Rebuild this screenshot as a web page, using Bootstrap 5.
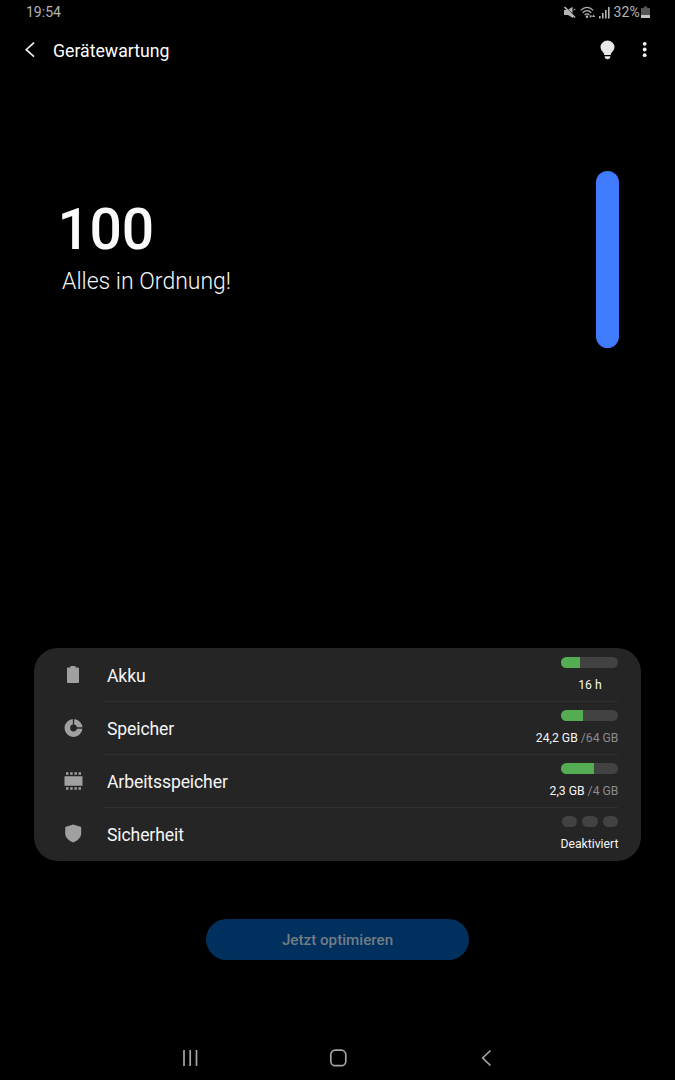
<!DOCTYPE html>
<html lang="de" data-bs-theme="dark">
<head>
<meta charset="utf-8">
<meta name="viewport" content="width=device-width, initial-scale=1">
<title>Gerätewartung</title>
<link href="https://cdn.jsdelivr.net/npm/bootstrap@5.3.0/dist/css/bootstrap.min.css" rel="stylesheet">
<style>
  body { background: #000; color: #f5f5f5; font-family: Roboto, "Liberation Sans", sans-serif; height: 1080px; overflow: hidden; }
  svg { display: block; flex: none; }
  .status { height: 25px; padding: 0 25px 0 26px; color: #b4b4b4; font-size: 14px; }
  .appbar { height: 50px; padding: 0 25px 0 24px; }
  .appbar h1 { font-size: 17.7px; line-height: 24px; margin-left: 17px; padding-top: 1px; }
  .hero { height: 573px; padding: 96px 56.4px 0 57.5px; }
  .score { font-size: 57px; line-height: 60px; font-weight: 500; margin-top: 29px; color: #fafafa; letter-spacing: -.3px; }
  .verdict { font-size: 23px; line-height: 30px; font-weight: 300; margin: 7px 0 0 4.5px; }
  .gauge { width: 23px; height: 177px; background: #407bff; }
  .panel { margin: 0 34px; height: 212.5px; border-radius: 24px; background: #252525; }
  .entry { height: 53.15px; padding: 0 22.6px 0 29px; }
  .entry-body { margin-left: 20px; padding-left: 3px; height: 53.6px; border-bottom: 1px solid #303030; }
  .entry:last-child .entry-body { border-color: transparent; }
  .entry-name { font-size: 17.6px; line-height: 24px; padding-top: 15.5px; letter-spacing: -.12px; }
  .entry-info { font-size: 12.2px; line-height: 16px; padding-top: 9px; }
  .meter { --bs-progress-height: 11px; --bs-progress-bg: #424242; --bs-progress-bar-bg: #54ad53; --bs-progress-border-radius: 6px; width: 57px; margin-bottom: 9px; }
  .total { color: #8b8b8b; }
  .dots { gap: 5.5px; }
  .dot { width: 15.3px; height: 11px; background: #424242; margin-bottom: 9px; }
  .optimize { --bs-btn-disabled-bg: #00305e; --bs-btn-disabled-color: #717c85; --bs-btn-disabled-opacity: 1; width: 263px; height: 41px; font-size: 15.2px; font-weight: 500; margin-top: 58px; }
  .optimize span { display: block; padding-top: 2px; }
  .navkeys { height: 44px; padding: 0 183px 0 182px; color: #a5a5a5; }
</style>
</head>
<body class="d-flex flex-column">
  <div class="status d-flex align-items-center justify-content-between">
    <span id="clock">19:54</span>
    <div class="d-flex align-items-center">
      <svg width="13" height="13" viewBox="0 0 13 13" fill="currentColor"><path d="M1 4h3.500L10 9.200V12L5 9H1zM5.500 3.600 9.500 .8V7.300zM10.200 4.100l1.800-1.500.5.800-1.900 1.200z"/><path d="m1.500 1 10.500 10.500" stroke="currentColor" stroke-width="1.700"/></svg>
      <svg style="margin-left:4px" width="16" height="13" viewBox="0 0 16 13" fill="none" stroke="currentColor" stroke-width="1.300"><path d="M.7 4.400Q7-1.600 13.300 4.400M2.700 6.700Q7 2.600 11.300 6.700M4.700 9Q7 6.800 9.300 9"/><circle cx="7" cy="10.800" r="1.300" fill="currentColor" stroke="none"/><path fill="currentColor" stroke="none" d="M9.200 9.500h3L10.700 12zM12 11h3.200l-1.600-2.600z"/></svg>
      <svg style="margin-left:3px" width="11" height="12" viewBox="0 0 11 12" fill="currentColor"><path d="M0 9h1.600V11.500H0zM3 6h1.600V11.500H3zM6 3h1.600V11.500H6zM9 0h1.600V11.500H9z"/></svg>
      <span id="charge" style="margin-left:3.500px;letter-spacing:.2px">32%</span>
      <svg style="margin-left:1px" width="9" height="13" viewBox="0 0 9 13"><path d="M2.800 .5h3.400v1.500H9V9H0V2h2.800z" fill="#555"/><path d="M0 9h9v3H0z" fill="#c6c6c6"/></svg>
    </div>
  </div>

  <header class="appbar d-flex align-items-center">
    <svg width="12" height="16" viewBox="0 0 12 16" fill="none" stroke="#f5f5f5" stroke-width="1.600"><path d="M10 .7 2.200 7.700l7.800 7"/></svg>
    <h1 class="fw-normal mb-0">Gerätewartung</h1>
    <div class="d-flex align-items-center ms-auto">
      <svg width="15" height="20" viewBox="0 0 14 20" preserveAspectRatio="none" fill="#e8e8e8"><path d="M7 .5A6.500 6.500 0 0 0 .5 7c0 2.200 1.100 3.800 2.300 5.200.8.800 1 1.600 1.200 2.800h6c.2-1.200.4-2 1.200-2.800C12.400 10.800 13.500 9.200 13.500 7A6.500 6.500 0 0 0 7 .5zM4.300 16.200h5.400c0 1.900-1.200 3-2.700 3s-2.700-1.100-2.700-3z"/></svg>
      <svg style="margin-left:27px" width="8" height="18" viewBox="0 0 8 18" fill="#f5f5f5"><circle cx="2.700" cy="2.800" r="1.900"/><circle cx="2.700" cy="8.500" r="1.900"/><circle cx="2.700" cy="14.200" r="1.900"/></svg>
    </div>
  </header>

  <section class="hero d-flex justify-content-between align-items-start">
    <div>
      <div class="score" id="score">100</div>
      <div class="verdict">Alles in Ordnung!</div>
    </div>
    <div class="gauge rounded-pill"></div>
  </section>

  <main>
    <div class="panel overflow-hidden">
      <div class="entry d-flex">
        <svg class="mt-3" width="21" height="21" viewBox="0 0 21 21" fill="#a0a0a0"><path d="M7.500 2h5v1.500H15q1 0 1 1V18q0 1-1 1H5q-1 0-1-1V4.500q0-1 1-1h2.500z"/></svg>
        <div class="entry-body flex-grow-1 d-flex justify-content-between">
          <div class="entry-name">Akku</div>
          <div class="entry-info d-flex flex-column align-items-center">
            <div class="progress meter"><div class="progress-bar" style="width:32%"></div></div>
            <div>16 h</div>
          </div>
        </div>
      </div>
      <div class="entry d-flex">
        <svg class="mt-3" width="21" height="21" viewBox="0 0 21 21"><circle cx="10.500" cy="11" r="6.200" fill="none" stroke="#a0a0a0" stroke-width="5.600"/><path d="M10.500 1v9M12 11h8.500" stroke="#252525" stroke-width="1.300"/></svg>
        <div class="entry-body flex-grow-1 d-flex justify-content-between">
          <div class="entry-name">Speicher</div>
          <div class="entry-info d-flex flex-column align-items-end">
            <div class="progress meter"><div class="progress-bar" style="width:38%"></div></div>
            <div>24,2 GB <span class="total">/64 GB</span></div>
          </div>
        </div>
      </div>
      <div class="entry d-flex">
        <svg class="mt-3" width="21" height="21" viewBox="0 0 21 21" fill="#a0a0a0"><path d="M1.500 6.200h18v9.500h-18zM3 2.200h2.500v2.500H3zM7.200 2.200h2.500v2.500H7.200zM11.400 2.200h2.500v2.500h-2.500zM15.500 2.200H18v2.500h-2.500zM3 17.200h2.500v2.500H3zM7.200 17.200h2.500v2.500H7.200zM11.400 17.200h2.500v2.500h-2.500zM15.500 17.200H18v2.500h-2.500z"/></svg>
        <div class="entry-body flex-grow-1 d-flex justify-content-between">
          <div class="entry-name">Arbeitsspeicher</div>
          <div class="entry-info d-flex flex-column align-items-end">
            <div class="progress meter"><div class="progress-bar" style="width:57%"></div></div>
            <div>2,3 GB <span class="total">/4 GB</span></div>
          </div>
        </div>
      </div>
      <div class="entry d-flex">
        <svg class="mt-3" width="21" height="21" viewBox="0 0 21 21" fill="#a0a0a0"><path d="M10.200 1.400 18.200 4v6.500c0 4-3.700 7.200-8 9-4.300-1.800-8-5-8-9V4z"/></svg>
        <div class="entry-body flex-grow-1 d-flex justify-content-between">
          <div class="entry-name">Sicherheit</div>
          <div class="entry-info d-flex flex-column align-items-end">
            <div class="d-flex dots"><div class="dot rounded-pill"></div><div class="dot rounded-pill"></div><div class="dot rounded-pill"></div></div>
            <div>Deaktiviert</div>
          </div>
        </div>
      </div>
    </div>
    <div class="text-center"><button class="btn optimize rounded-pill border-0 p-0" disabled><span>Jetzt optimieren</span></button></div>
  </main>

  <nav class="navkeys d-flex align-items-center justify-content-between mt-auto">
    <svg width="17" height="18" viewBox="0 0 17 18" stroke="currentColor" stroke-width="1.700"><path d="M2 1v16M8.200 1v16M14.500 1v16"/></svg>
    <svg width="18" height="18" viewBox="1.700 0 18 18" overflow="visible" fill="none" stroke="currentColor" stroke-width="1.700"><rect x="1.500" y="1.200" width="15" height="15.500" rx="4.500"/></svg>
    <svg width="11" height="18" viewBox="0 0 11 18" fill="none" stroke="currentColor" stroke-width="1.700"><path d="M9.500 1.500 1.700 9l7.800 7.500"/></svg>
  </nav>
<script src="https://cdn.jsdelivr.net/npm/bootstrap@5.3.0/dist/js/bootstrap.bundle.min.js"></script>
</body>
</html>
